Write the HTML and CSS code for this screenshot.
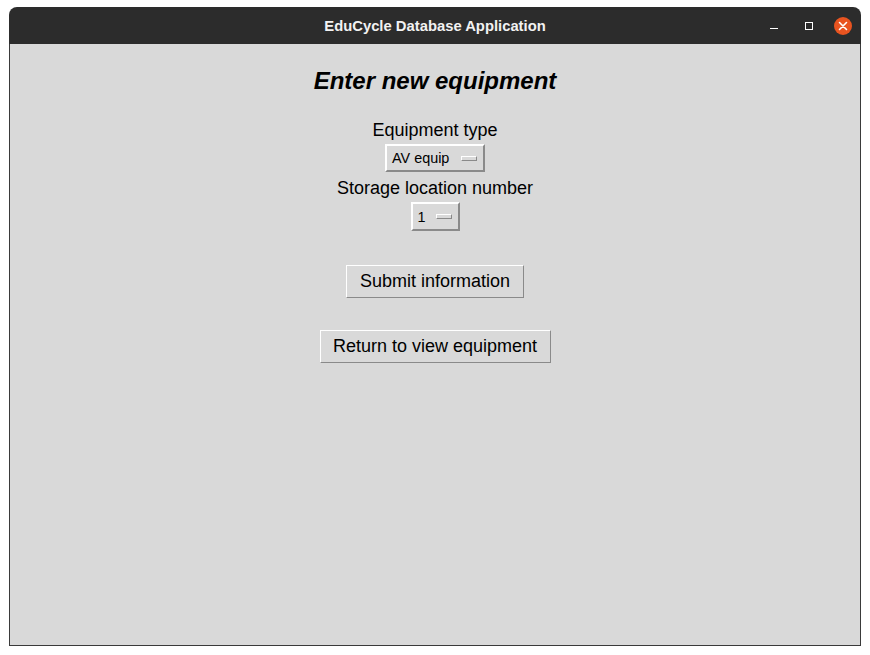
FILE: index.html
```html
<!DOCTYPE html>
<html>
<head>
<meta charset="utf-8">
<title>EduCycle Database Application</title>
<link rel="stylesheet" href="styles.css">
</head>
<body>
<div class="window">
  <div class="titlebar">
    <div class="title">EduCycle Database Application</div>
    <div class="controls">
      <span class="ctl min"><svg width="12" height="12" viewBox="0 0 12 12"><rect x="2" y="8" width="8" height="1" fill="#ffffff"/></svg></span>
      <span class="ctl max"><svg width="12" height="12" viewBox="0 0 12 12"><rect x="2.5" y="2.5" width="7" height="7" fill="none" stroke="#ffffff" stroke-width="1"/></svg></span>
      <span class="ctl close"><svg width="18" height="18" viewBox="0 0 18 18"><circle cx="9" cy="9" r="9" fill="#e95420"/><path d="M5.5 5.5 L12.5 12.5 M12.5 5.5 L5.5 12.5" stroke="#ffffff" stroke-width="1.6" stroke-linecap="round"/></svg></span>
    </div>
  </div>
  <div class="content">
    <h1 class="heading">Enter new equipment</h1>
    <div class="label first">Equipment type</div>
    <div class="option wide"><span class="opt-text">AV equip</span><span class="indicator"></span></div>
    <div class="label second">Storage location number</div>
    <div class="option narrow"><span class="opt-text">1</span><span class="indicator"></span></div>
    <button class="btn submit">Submit information</button>
    <button class="btn back">Return to view equipment</button>
  </div>
</div>
</body>
</html>
```

FILE: styles.css
```css
html, body {
  margin: 0;
  padding: 0;
  background: #ffffff;
}
body {
  width: 870px;
  height: 655px;
  overflow: hidden;
}
.window {
  margin: 7px 0 0 9px;
  width: 852px;
  height: 639px;
  display: flex;
  flex-direction: column;
  border-radius: 8px 8px 0 0;
  overflow: hidden;
}
.titlebar {
  height: 37px;
  background: #2c2c2c;
  position: relative;
  display: flex;
  align-items: center;
  justify-content: center;
  flex: none;
}
.title {
  color: #f2f2f2;
  font-family: "Liberation Sans", Arial, sans-serif;
  font-weight: bold;
  font-size: 14.8px;
  padding-top: 1px;
}
.controls {
  position: absolute;
  right: 9px;
  top: 0;
  height: 37px;
  display: flex;
  align-items: center;
}
.ctl {
  display: flex;
  align-items: center;
}
.ctl.min {
  margin-right: 23px;
}
.ctl.max {
  margin-right: 19px;
}
.content {
  flex: 1;
  background: #d9d9d9;
  border: 1px solid #3a3a3a;
  border-top: none;
  display: flex;
  flex-direction: column;
  align-items: center;
  font-family: "Liberation Sans", Arial, sans-serif;
  color: #000000;
}
.heading {
  margin: 23px 0 0 0;
  font-size: 24px;
  line-height: 28px;
  font-style: italic;
  font-weight: bold;
}
.label {
  font-size: 18px;
  line-height: 22px;
}
.label.first {
  margin-top: 24px;
}
.label.second {
  margin-top: 5px;
}
.option {
  box-sizing: border-box;
  height: 28px;
  display: flex;
  align-items: center;
  background: #d9d9d9;
  border-style: solid;
  border-width: 2px;
  border-color: #ffffff #8a8a8a #8a8a8a #ffffff;
  font-size: 14.4px;
  padding: 0 5px 0 5px;
}
.option.wide {
  width: 100px;
  margin-top: 3px;
}
.option.narrow {
  width: 49px;
  margin-top: 3px;
  height: 29px;
}
.opt-text {
  flex: 1;
}
.indicator {
  box-sizing: border-box;
  width: 16px;
  height: 5px;
  border-style: solid;
  border-width: 1px;
  border-color: #ffffff #8a8a8a #8a8a8a #ffffff;
  background: #d9d9d9;
  margin-right: 1px;
}
.btn {
  box-sizing: border-box;
  height: 33px;
  background: #d9d9d9;
  border-style: solid;
  border-width: 1px;
  border-color: #ffffff #8a8a8a #8a8a8a #ffffff;
  font-family: "Liberation Sans", Arial, sans-serif;
  font-size: 18px;
  color: #000000;
  padding: 0 12px;
  margin: 0;
}
.btn.submit {
  margin-top: 34px;
  width: 178px;
}
.btn.back {
  margin-top: 32px;
  width: 231px;
}
```
